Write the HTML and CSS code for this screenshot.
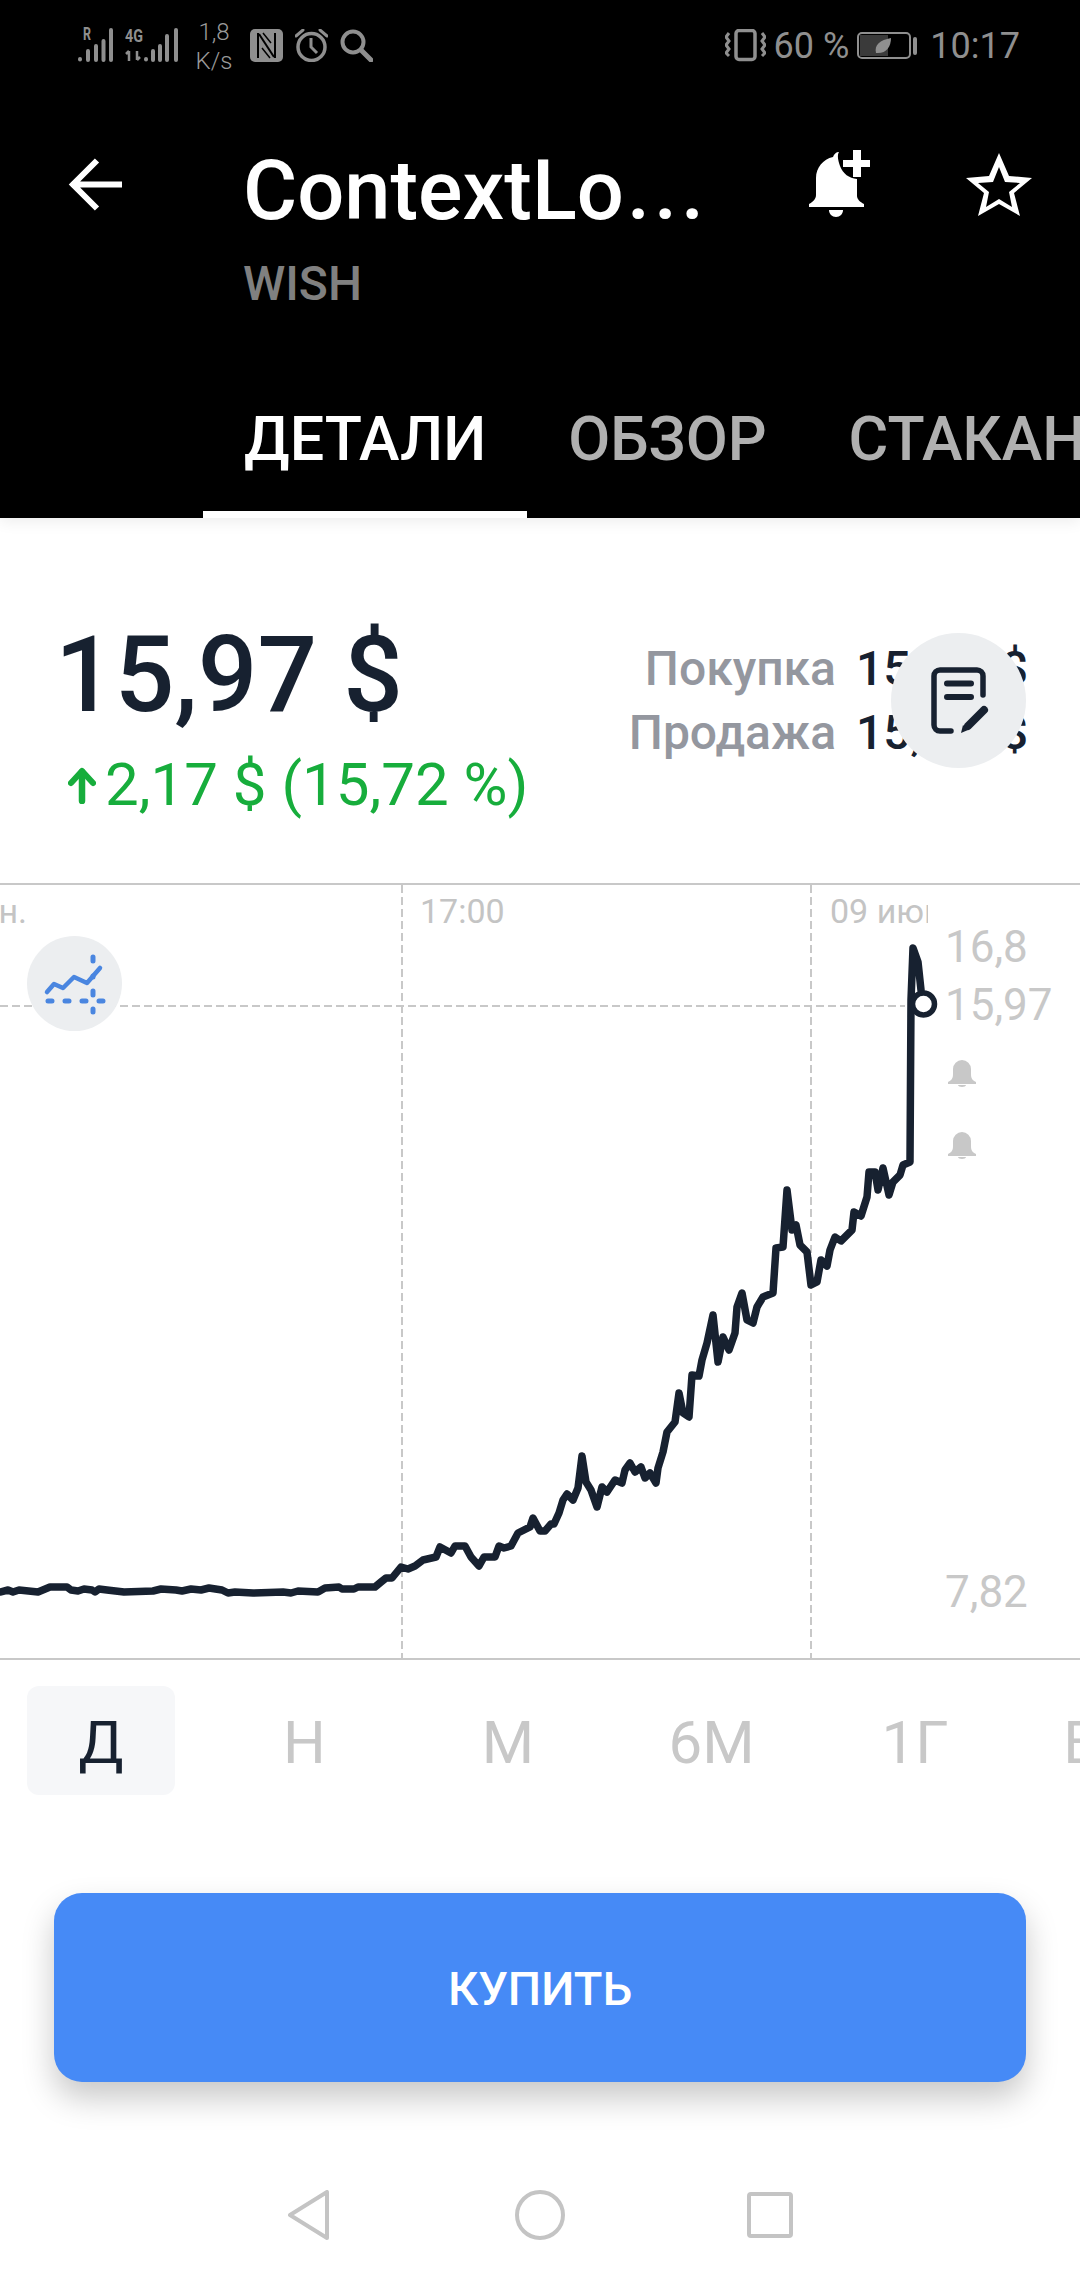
FILE: index.html
```html
<!DOCTYPE html>
<html lang="ru">
<head>
<meta charset="utf-8">
<title>WISH</title>
<link rel="stylesheet" href="styles.css">
</head>
<body>
<div class="screen">
  <header class="header">
    <div class="status">
      <div class="status-left">
        <svg class="ic" width="35" height="50" viewBox="78 20 35 50">
          <text x="83" y="40" class="sig-t" textLength="8" lengthAdjust="spacingAndGlyphs">R</text>
          <g fill="none" stroke="#8f8f8f" stroke-width="4" stroke-linecap="round"><path d="M80 59v.5M88 51v9M96 46v14M103.500 41v19M111 30v30"/></g>
        </svg>
        <svg class="ic" width="53" height="50" viewBox="125 20 53 50">
          <text x="125" y="42" class="sig-t" textLength="18" lengthAdjust="spacingAndGlyphs">4G</text>
          <g fill="none" stroke="#8f8f8f" stroke-width="2.500"><path d="M129 51v10M126 54l3-3M137 51v9M137 60l3-3"/></g>
          <g fill="none" stroke="#8f8f8f" stroke-width="4" stroke-linecap="round"><path d="M146 59v.5M153 51v9M160 46v14M167 36v24M176 30v30"/></g>
        </svg>
        <div class="speed"><span>1,8</span><span>K/s</span></div>
        <svg class="ic" width="33" height="33" viewBox="250 29 33 33">
          <rect x="250" y="29" width="33" height="33" rx="5" fill="#8f8f8f"/>
          <path d="M258 33v25M275 33v25" fill="none" stroke="#000" stroke-width="2"/>
          <path d="M259 34l15 23" fill="none" stroke="#000" stroke-width="2"/>
          <path d="M262 48l8 10M271 43l-8-10" fill="none" stroke="#000" stroke-width="1.500"/>
        </svg>
        <svg class="ic" width="33" height="33" viewBox="295 29 33 33" fill="none" stroke="#8f8f8f">
          <circle cx="311.500" cy="47" r="13.500" stroke-width="3.500"/>
          <path d="M311 38v9l6 6" stroke-width="3"/>
          <path d="M296 36l7-6M327 36l-7-6" stroke-width="3" stroke-linecap="round"/>
        </svg>
        <svg class="ic" width="33" height="33" viewBox="340 29 33 33" fill="none" stroke="#8f8f8f">
          <circle cx="353" cy="42" r="10.500" stroke-width="4"/>
          <path d="M361 50l10 10" stroke-width="5" stroke-linecap="round"/>
        </svg>
      </div>
      <div class="status-right">
        <svg class="ic" width="41" height="33" viewBox="728 30 41 33" fill="none" stroke="#8f8f8f">
          <rect x="739" y="31.500" width="19" height="29" rx="3" stroke-width="3.500"/>
          <path d="M732 34l-3 4 3 4-3 4 3 4-3 4 3 3M765 34l3 4-3 4 3 4-3 4 3 4-3 3" stroke-width="3"/>
        </svg>
        <span class="st-text">60 %</span>
        <svg class="ic" width="60" height="27" viewBox="860 32 60 27">
          <rect x="861" y="33" width="52" height="25" rx="4" fill="none" stroke="#8f8f8f" stroke-width="2"/>
          <rect x="863" y="35" width="28" height="21" fill="#3a3a3a"/>
          <path d="M879 53c-2-8 4-13 15-15 0 9-5 16-15 15z" fill="#8f8f8f"/>
          <rect x="916" y="37" width="4" height="18" rx="2" fill="#8f8f8f"/>
        </svg>
        <span class="st-text st-time">10:17</span>
      </div>
    </div>
    <div class="toolbar">
      <svg class="back" width="54" height="54" viewBox="68 158 54 54" fill="none" stroke="#fff" stroke-width="6">
        <path d="M122 184.500H73M97 160.500L73 184.500l24 24"/>
      </svg>
      <div class="titles">
        <div class="title">ContextLo<span class="dots">...</span></div>
        <div class="ticker">WISH</div>
      </div>
      <svg class="bell-add" width="61" height="67" viewBox="809 150 61 67" fill="#fff">
        <path d="M833 157c1-3 3-5 6-5-2 3-1 8 1 14 3 8 9 12 17 13v17c0 3 3 6 7 8v3h-55v-3c4-2 7-5 7-9v-17c0-10 7-19 17-21z"/>
        <path d="M829 210h14c0 4-3 7-7 7s-7-3-7-7z"/>
        <path d="M853 150h8v10h9v7h-9v10h-8v-10h-10v-7h10z"/>
      </svg>
      <svg class="star" width="67" height="63" viewBox="965 153 67 63" fill="#fff" fill-rule="evenodd">
        <path d="M999 153l10 23 23 2-18 15 6 23-21-12-21 12 6-23-18-15 23-2zM999 167l-6 15-15 1 11 9-3 15 13-8 13 8-3-15 11-9-15-1z"/>
      </svg>
    </div>
    <nav class="tabs">
      <div class="tab tab-on">ДЕТАЛИ</div>
      <div class="tab">ОБЗОР</div>
      <div class="tab">СТАКАН</div>
    </nav>
  </header>

  <section class="quote">
    <div class="quote-left">
      <div class="price">15,97 $</div>
      <div class="change">
        <svg width="28" height="37" viewBox="68 765 28 37" fill="none" stroke="#17ad3c" stroke-linecap="round" stroke-linejoin="round">
          <path d="M82 799V770" stroke-width="6.500"/>
          <path d="M71 781l11-12 11 12" stroke-width="6"/>
        </svg>
        <span>2,17 $ (15,72 %)</span>
      </div>
    </div>
    <div class="quote-right">
      <div class="bidask"><span class="ba-label">Покупка</span><span class="ba-val">15,97 $</span></div>
      <div class="bidask"><span class="ba-label">Продажа</span><span class="ba-val">15,97 $</span></div>
    </div>
    <button class="fab" type="button" aria-label="Заметка">
      <svg width="62" height="72" viewBox="930 665 62 72" fill="none" stroke="#172130" stroke-linecap="round">
        <path d="M984 695v-19a6 6 0 0 0-6-6h-37a6 6 0 0 0-6 6v49a6 6 0 0 0 6 6h11" stroke-width="5.500"/>
        <path d="M948 683.500h24M948 697h24" stroke-width="6"/>
        <path d="M985 710l-16 16" stroke-width="8"/>
        <path d="M962 733l2-8 5 5z" fill="#172130" stroke="none"/>
      </svg>
    </button>
  </section>

  <section class="chart">
    <svg class="plot" width="1080" height="777" viewBox="0 883 1080 777" fill="none">
      <g stroke="#c8c8c8" stroke-width="2" stroke-dasharray="8 4">
        <path d="M402 885V1658M811 885V1658"/>
        <path d="M0 1006H905"/>
      </g>
      <path class="line" d="M0 1592L8 1590 13 1592 19 1590 38 1592 50 1587 67 1587 71 1590 78 1591 84 1589 92 1590 95 1592 99 1589 107 1590 124 1592 153 1591 161 1589 176 1590 182 1591 191 1589 201 1590 209 1588 222 1590 228 1593 235 1592 253 1593 283 1592 291 1593 298 1591 318 1592 325 1588 339 1587 342 1589 354 1589 358 1587 375 1587 381 1582 386 1578 392 1578 401 1567 408 1569 415 1566 423 1560 436 1557 440 1547 451 1553 455 1546 465 1546 471 1557 479 1566 484 1557 495 1557 499 1546 504 1548 511 1546 518 1533 530 1527 533 1518 540 1531 545 1531 551 1524 554 1524 559 1513 563 1500 567 1494 573 1500 578 1488 582 1456 586 1482 591 1490 597 1507 602 1487 607 1492 615 1480 622 1483 625 1470 630 1463 635 1472 641 1467 645 1478 650 1473 656 1483 658 1468 663 1452 667 1432 675 1422 679 1393 683 1413 689 1417 692 1375 699 1376 702 1360 707 1343 713 1315 718 1362 723 1337 729 1350 735 1333 737 1307 742 1293 747 1320 753 1323 757 1307 763 1297 773 1293 776 1248 783 1247 787 1190 792 1230 796 1225 800 1245 807 1252 811 1285 817 1282 821 1260 827 1266 830 1250 835 1237 841 1241 852 1230 854 1212 861 1216 867 1197 869 1172 875 1172 878 1190 883 1168 889 1195 893 1182 900 1175 903 1165 910 1162 911 1000 913 948 918 962 921 990"/>
      <circle cx="923.500" cy="1004" r="11" fill="#fff" stroke="#172130" stroke-width="5.500"/>
      <g fill="#c8c8c8">
        <path d="M948 1082c4-2 5-4 5-8v-5a9 9 0 0 1 18 0v5c0 4 1 6 5 8v2h-28z"/>
        <path d="M958 1085h8c0 1-2 2-4 2s-4-1-4-2z"/>
        <path d="M948 1154c4-2 5-4 5-8v-5a9 9 0 0 1 18 0v5c0 4 1 6 5 8v2h-28z"/>
        <path d="M958 1157h8c0 1-2 2-4 2s-4-1-4-2z"/>
      </g>
    </svg>
    <div class="dates">
      <span class="date date-a">08 июн.</span>
      <span class="date date-b">17:00</span>
      <span class="date date-c">09 июн.</span>
    </div>
    <span class="axis axis-hi">16,8</span>
    <span class="axis axis-cur">15,97</span>
    <span class="axis axis-lo">7,82</span>
    <button class="chart-btn" type="button" aria-label="Инструменты графика">
      <svg width="64" height="64" viewBox="42 951 64 64" fill="none" stroke="#4a86e0" stroke-linecap="round" stroke-linejoin="round">
        <path d="M46 991l7-8 9 4 11-11 13 6 13-15" stroke-width="4.500"/>
        <path d="M47 1000h4M64 1000h4M81 1000h4M98 1000h4M92 956v4M92 975v1M92 990v4M92 1008v3" stroke-width="5"/>
      </svg>
    </button>
  </section>

  <div class="ranges">
    <div class="range range-on">Д</div>
    <div class="range">Н</div>
    <div class="range">М</div>
    <div class="range">6М</div>
    <div class="range">1Г</div>
    <div class="range">ВСЕ</div>
  </div>

  <button class="buy" type="button">КУПИТЬ</button>

  <div class="navbar">
    <svg width="42" height="50" viewBox="288 2190 42 50" fill="none" stroke="#c4c4c4" stroke-width="4" stroke-linejoin="round"><path d="M327 2192v46l-37-23z"/></svg>
    <svg width="50" height="50" viewBox="515 2190 50 50" fill="none" stroke="#c4c4c4" stroke-width="4"><circle cx="540" cy="2215" r="23"/></svg>
    <svg width="46" height="46" viewBox="747 2192 46 46" fill="none" stroke="#c4c4c4" stroke-width="4"><rect x="749" y="2194" width="42" height="42" rx="2"/></svg>
  </div>
</div>
</body>
</html>
```

FILE: styles.css
```css
* { box-sizing: border-box; }
html, body { margin: 0; padding: 0; background: #fff; }
body { font-family: Roboto, "Noto Sans", sans-serif; }
button { border: 0; padding: 0; font: inherit; }
svg { display: block; flex: none; }

.screen {
  position: relative;
  width: 1080px;
  height: 2280px;
  overflow: hidden;
  background: #fff;
  display: flex;
  flex-direction: column;
}

/* header */
.header {
  position: relative;
  z-index: 2;
  height: 518px;
  flex: none;
  background: #000;
  box-shadow: 0 4px 14px rgba(0, 0, 0, .07);
  overflow: hidden;
}
.status {
  height: 90px;
  padding: 0 60px 0 78px;
  display: flex;
  align-items: center;
  justify-content: space-between;
  color: #8f8f8f;
}
.status-left, .status-right { display: flex; align-items: center; }
.status-left { gap: 12px; }
.status-right { gap: 8px; }
.sig-t { fill: #8f8f8f; font: 700 18px Roboto, sans-serif; }
.speed {
  margin: 3px 6px 0;
  display: flex;
  flex-direction: column;
  align-items: center;
  font-size: 24px;
  line-height: 29px;
  width: 36px;
  font-weight: 300;
  color: #9a9a9a;
}
.st-text { font-size: 36px; line-height: 40px; color: #8f8f8f; margin-top: 2px; }
.st-time { margin-left: 5px; }

.toolbar {
  height: 290px;
  padding: 53px 48px 0 68px;
  display: flex;
  align-items: flex-start;
}
.back { margin: 15px 0 0 0; }
.titles { margin-left: 121px; width: 463px; }
.title {
  font-size: 83px;
  line-height: 96px;
  font-weight: 500;
  color: #fff;
  white-space: nowrap;
}
.dots { letter-spacing: 4px; margin-left: 3px; }
.ticker {
  margin-top: 17px;
  font-size: 48px;
  line-height: 56px;
  font-weight: 500;
  color: #808080;
}
.bell-add { margin: 7px 0 0 103px; }
.star { margin: 10px 0 0 95px; }

.tabs {
  height: 138px;
  padding-left: 203px;
  display: flex;
  white-space: nowrap;
}
.tab {
  height: 138px;
  padding: 25px 41px 0;
  font-size: 61px;
  line-height: 68px;
  font-weight: 500;
  color: #b0b0b0;
  flex: none;
}
.tab-on { color: #fff; border-bottom: 7px solid #fff; }

/* quote */
.quote {
  position: relative;
  height: 365px;
  flex: none;
  display: flex;
  justify-content: space-between;
}
.quote-left { padding: 95px 0 0 55px; }
.price {
  font-size: 105px;
  line-height: 126px;
  font-weight: 500;
  color: #172130;
  white-space: nowrap;
}
.change {
  margin: 10px 0 0 13px;
  display: flex;
  align-items: center;
  gap: 9px;
  font-size: 60px;
  line-height: 72px;
  color: #17ad3c;
  white-space: nowrap;
}
.quote-right { padding: 119px 53px 0 0; }
.bidask {
  display: flex;
  justify-content: flex-end;
  gap: 20px;
  font-size: 48px;
  line-height: 64px;
  font-weight: 500;
  white-space: nowrap;
}
.ba-label { color: #94979f; }
.ba-val { color: #172130; width: 171px; word-spacing: 13px; }
.fab {
  position: absolute;
  left: 891px;
  top: 115px;
  width: 135px;
  height: 135px;
  border-radius: 50%;
  background: #eceef0;
  display: flex;
  align-items: center;
  justify-content: center;
}
.fab svg { margin: 0 0 0 2px; }

/* chart */
.chart {
  position: relative;
  height: 777px;
  flex: none;
  border-top: 2px solid #c8c8c8;
  border-bottom: 2px solid #c8c8c8;
}
.plot { position: absolute; left: 0; top: -2px; }
.line { stroke: #172130; stroke-width: 7.5; stroke-linejoin: round; stroke-linecap: round; }
.dates {
  position: absolute;
  left: 0;
  top: 0;
  width: 928px;
  height: 60px;
  overflow: hidden;
}
.date {
  position: absolute;
  top: 6px;
  font-size: 34px;
  line-height: 40px;
  font-weight: 400;
  color: #c4c4c4;
  white-space: nowrap;
}
.date-a { right: 901px; }
.date-b { left: 420px; }
.date-c { left: 830px; }
.axis {
  position: absolute;
  left: 945px;
  font-size: 44px;
  line-height: 52px;
  color: #c8c8c8;
}
.axis-hi { top: 36px; }
.axis-cur { top: 94px; }
.axis-lo { top: 681px; }
.chart-btn {
  position: absolute;
  left: 27px;
  top: 51px;
  width: 95px;
  height: 95px;
  border-radius: 50%;
  background: #eceef0;
  display: flex;
  align-items: center;
  justify-content: center;
}

/* ranges */
.ranges {
  margin: 26px 0 0 27px;
  display: flex;
  gap: 55.5px;
  flex: none;
}
.range {
  flex: none;
  width: 148px;
  height: 109px;
  border-radius: 12px;
  font-size: 60px;
  line-height: 114px;
  text-align: center;
  color: #c8c8c8;
}
.range-on { background: #f6f7f9; color: #172130; }

/* buy */
.buy {
  margin: 98px 54px 0;
  height: 189px;
  padding-top: 2px;
  flex: none;
  border-radius: 28px;
  background: #468af6;
  color: #fff;
  font-size: 47px;
  font-weight: 500;
  box-shadow: 0 16px 32px rgba(0, 0, 0, .22);
}

/* nav */
.navbar {
  margin-top: 108px;
  padding-left: 288px;
  display: flex;
  align-items: center;
  flex: none;
}
.navbar svg:nth-child(2) { margin-left: 185px; }
.navbar svg:nth-child(3) { margin-left: 182px; }
```
